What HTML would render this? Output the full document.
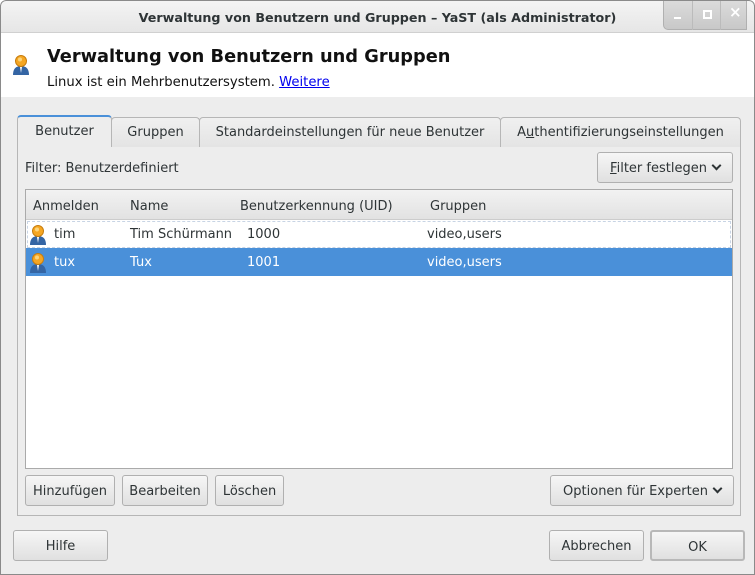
<!DOCTYPE html>
<html><head><meta charset="utf-8"><style>
*{box-sizing:border-box;margin:0;padding:0}
body{width:755px;height:575px;overflow:hidden;background:#fff;font-family:"DejaVu Sans","Liberation Sans",sans-serif;font-size:13px;color:#2e3436;position:relative}
.win{position:absolute;left:0;top:0;width:755px;height:575px;border-radius:6px 6px 0 0;background:#ededed;overflow:hidden}
.frame{position:absolute;left:0;top:0;width:755px;height:575px;border:1px solid #8a8a8a;border-radius:6px 6px 0 0;pointer-events:none}
.title{position:absolute;left:0;top:0;width:755px;height:33px;background:linear-gradient(#f4f4f4,#e6e6e6);border-bottom:1px solid #d0d0d0;text-align:center;font-weight:bold;font-size:12.7px;line-height:35px;color:#2e3436}
.wb{position:absolute;top:0;height:30px;width:84px;left:663px;background:linear-gradient(#dcdcdc,#c8c8c8);border:1px solid #b0b0b0;border-top:none;border-radius:0 0 0 5px}
.wb div{position:absolute;top:0;height:30px;border-left:1px solid #bbb}
.head{position:absolute;left:0;top:33px;width:755px;height:64px;background:#fff}
.abs{position:absolute;white-space:nowrap}
.tab{position:absolute;top:117px;height:30px;border:1px solid #b6b6b6;border-bottom:none;border-radius:4px 4px 0 0;background:linear-gradient(#f0f0f0,#e4e4e4);text-align:center;line-height:30px}
.btn{position:absolute;height:31px;border:1px solid #b0b0b0;border-radius:3px;background:linear-gradient(#f6f6f6,#e0e0e0);text-align:center;line-height:31px;white-space:nowrap}
.icon{position:absolute;width:18px;height:24px}
.chev{display:inline-block;width:7px;height:7px;border-right:2px solid #2e3436;border-bottom:2px solid #2e3436;transform:rotate(45deg);margin:0 0 3px 6px}
.t{top:2px}
</style></head><body>
<div class="win">
<div class="title">Verwaltung von Benutzern und Gruppen – YaST (als Administrator)</div>
<div class="wb"><div style="left:28px"></div><div style="left:56px"></div>
<span class="abs" style="left:10px;top:17px;width:7px;height:2px;background:#fff"></span>
<span class="abs" style="left:39px;top:10px;width:9px;height:9px;border:2px solid #fff"></span>
<span class="abs" style="left:65px;top:3px;color:#fff;font-weight:bold;font-size:15px">×</span></div>
<div class="head">
<svg class="icon" style="left:12px;top:19px" viewBox="0 0 18 24"><path d="M1 23 Q1 14 9 14 Q17 14 17 23Z" fill="#3465a4"/><path d="M8 15 L9 21 L10 15Z" fill="#fff"/><circle cx="9" cy="9" r="5.5" fill="#f5a623" stroke="#c77d0e"/><circle cx="8" cy="7.5" r="2" fill="#fcd47a"/></svg>
<div class="abs" style="left:47px;top:13px;font-size:17.8px;font-weight:bold;color:#111">Verwaltung von Benutzern und Gruppen</div>
<div class="abs" style="left:47px;top:42px;font-size:13.2px;color:#111">Linux ist ein Mehrbenutzersystem. <span style="color:#0000ee;text-decoration:underline">Weitere</span></div>
</div>
<div class="abs" style="left:17px;top:145px;width:724px;height:371px;border:1px solid #b6b6b6;background:#ededed"></div>
<div class="tab" style="left:17px;width:95px;top:115px;height:32px;background:#ededed;border-top:2px solid #4a90d9">Benutzer</div>
<div class="tab" style="left:111px;width:89px">Gruppen</div>
<div class="tab" style="left:199px;width:302px">Standardeinstellungen für neue Benutzer</div>
<div class="tab" style="left:500px;width:241px">A<u>u</u>thentifizierungseinstellungen</div>
<div class="abs" style="left:25px;top:161px">Filter: Benutzerdefiniert</div>
<div class="btn" style="left:597px;top:152px;width:136px"><u>F</u>ilter festlegen<span class="chev"></span></div>
<div class="abs" style="left:25px;top:189px;width:708px;height:280px;border:1px solid #aaa;background:#fff"></div>
<div class="abs" style="left:26px;top:190px;width:706px;height:30px;background:linear-gradient(#f2f2f2,#e2e2e2);border-bottom:1px solid #ccc"></div>
<div class="abs" style="left:33px;top:199px">Anmelden</div>
<div class="abs" style="left:130px;top:199px">Name</div>
<div class="abs" style="left:240px;top:199px">Benutzerkennung (UID)</div>
<div class="abs" style="left:430px;top:199px">Gruppen</div>
<div class="abs" style="left:27px;top:221px;width:704px;height:27px;border:1px dashed #c8d4e4"></div>
<div class="abs" style="left:26px;top:248px;width:706px;height:28px;background:#4a90d9"></div>
<svg class="icon" style="left:29px;top:222px" viewBox="0 0 18 24"><path d="M1 23 Q1 14 9 14 Q17 14 17 23Z" fill="#3465a4"/><path d="M8 15 L9 21 L10 15Z" fill="#fff"/><circle cx="9" cy="9" r="5.5" fill="#f5a623" stroke="#c77d0e"/><circle cx="8" cy="7.5" r="2" fill="#fcd47a"/></svg>
<svg class="icon" style="left:29px;top:250px" viewBox="0 0 18 24"><path d="M1 23 Q1 14 9 14 Q17 14 17 23Z" fill="#3465a4"/><path d="M8 15 L9 21 L10 15Z" fill="#fff"/><circle cx="9" cy="9" r="5.5" fill="#f5a623" stroke="#c77d0e"/><circle cx="8" cy="7.5" r="2" fill="#fcd47a"/></svg>
<div class="abs" style="left:54px;top:227px">tim</div>
<div class="abs" style="left:130px;top:227px">Tim Schürmann</div>
<div class="abs" style="left:247px;top:227px">1000</div>
<div class="abs" style="left:427px;top:227px">video,users</div>
<div class="abs" style="left:54px;top:255px;color:#fff">tux</div>
<div class="abs" style="left:130px;top:255px;color:#fff">Tux</div>
<div class="abs" style="left:247px;top:255px;color:#fff">1001</div>
<div class="abs" style="left:427px;top:255px;color:#fff">video,users</div>
<div class="btn" style="left:25px;top:475px;width:90px">Hinzufügen</div>
<div class="btn" style="left:122px;top:475px;width:86px">Bearbeiten</div>
<div class="btn" style="left:215px;top:475px;width:69px">Löschen</div>
<div class="btn" style="left:550px;top:475px;width:184px">Optionen für Experten<span class="chev"></span></div>
<div class="btn" style="left:13px;top:530px;width:95px">Hilfe</div>
<div class="btn" style="left:549px;top:530px;width:95px">Abbrechen</div>
<div class="btn" style="left:650px;top:530px;width:95px;border:2px solid #b8b8b8">OK</div>
<div class="frame"></div>
</div>
</body></html>
